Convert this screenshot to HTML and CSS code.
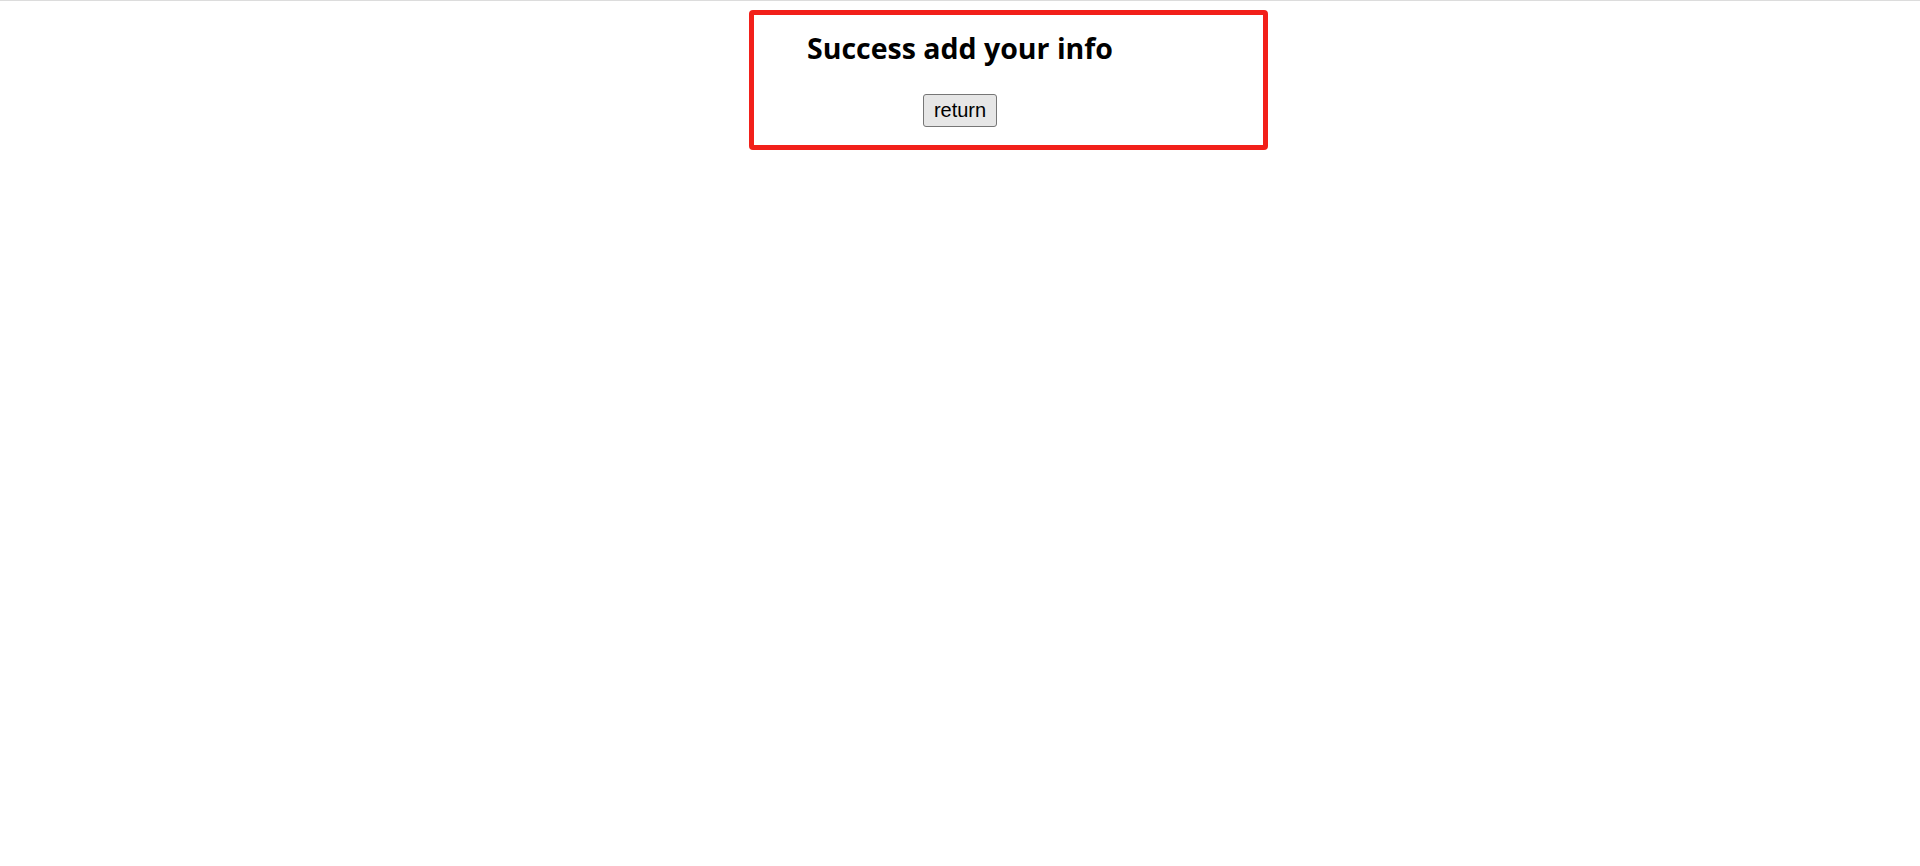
FILE: index.html
```html
<!DOCTYPE html>
<html lang="en">

<head>
    <meta charset="UTF-8">
    <meta name="viewport" content="width=device-width, initial-scale=1.0">
    <title>Success</title>
    <link rel="stylesheet" href="styles.css">
</head>

<body>
    <div class="card">
        <h2>Success add your info</h2>
        <button type="button" onclick="location.href='index.html'">return</button>
    </div>
</body>

</html>
```

FILE: styles.css
```css
body {
    margin: 0;
    border-top: 1px solid #dcdcdc;
    background-color: #ffffff;
    font-family: 'Open Sans', 'Noto Sans', sans-serif;
}

.card {
    width: 519px;
    box-sizing: border-box;
    margin: 9px 0 0 calc(50% - 211px);
    padding: 16px 97px 18px 0;
    border: 5px solid #f2201a;
    border-radius: 4px;
    display: flex;
    flex-direction: column;
    align-items: center;
}

h2 {
    margin: 0 0 29px 0;
    font-size: 28.5px;
    font-weight: 700;
    line-height: 34px;
    color: #000000;
}

button {
    font-family: 'Liberation Sans', Arial, sans-serif;
    font-size: 20px;
    padding: 4px 10px;
    color: #000000;
    background-color: #e6e6e6;
    border: 1px solid #767676;
    border-radius: 3px;
    line-height: 23px;
}
```
